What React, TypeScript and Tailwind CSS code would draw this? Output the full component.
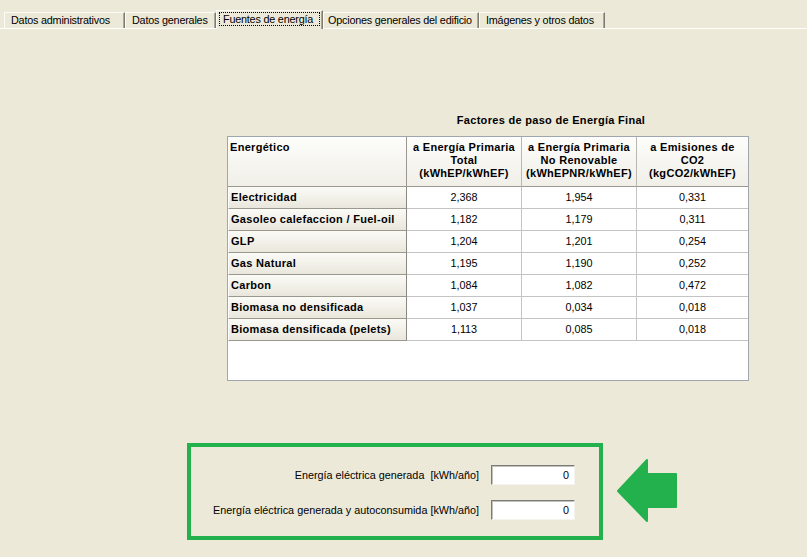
import React from "react";

const rows: string[][] = [
  ["Electricidad", "2,368", "1,954", "0,331"],
  ["Gasoleo calefaccion / Fuel-oil", "1,182", "1,179", "0,311"],
  ["GLP", "1,204", "1,201", "0,254"],
  ["Gas Natural", "1,195", "1,190", "0,252"],
  ["Carbon", "1,084", "1,082", "0,472"],
  ["Biomasa no densificada", "1,037", "0,034", "0,018"],
  ["Biomasa densificada (pelets)", "1,113", "0,085", "0,018"],
];

function Tab({ label, w, pl }: { label: string; w: string; pl: string }) {
  return (
    <div
      className={`${w} ${pl} h-[16px] flex items-center overflow-hidden tracking-[-0.2px] border-t border-l border-t-[#fbfbf8] border-l-[#fbfbf8] border-r border-r-[#7d7b72] shadow-[inset_-1px_0_#aca899] whitespace-nowrap`}
    >
      {label}
    </div>
  );
}

function Field({ label }: { label: string }) {
  return (
    <div className="flex items-center justify-end gap-[12px]">
      <span className="whitespace-pre">{label}</span>
      <div className="w-[84px] h-[20px] bg-white border border-t-[#7a7a7a] border-l-[#7a7a7a] border-b-[#f4f3ee] border-r-[#f4f3ee] shadow-[inset_1px_1px_#c4c2b8] flex items-center justify-end pr-[5px]">
        0
      </div>
    </div>
  );
}

export default function App() {
  return (
    <div className="w-[807px] h-[557px] bg-[#ECE9D8] overflow-hidden font-['Liberation_Sans',Arial,sans-serif] text-[10.8px] leading-none text-black">
      {/* tab strip */}
      <div className="h-[29px] flex items-end pl-[4px] border-b border-b-white">
        <Tab label="Datos administrativos" w="w-[121px]" pl="pl-[6px]" />
        <Tab label="Datos generales" w="w-[91px]" pl="pl-[6px]" />
        <div className="relative z-10 -mb-[1px] w-[107px] h-[19px] pt-[1px] px-[2px] bg-[#ECE9D8] border-t border-l border-t-[#fbfbf8] border-l-[#fbfbf8] border-r border-r-[#7d7b72] shadow-[inset_-1px_0_#aca899]">
          <div className="h-[14px] border border-dotted border-black flex items-center pl-[3px] tracking-[-0.2px] whitespace-nowrap overflow-hidden">
            Fuentes de energía
          </div>
        </div>
        <Tab label="Opciones generales del edificio" w="w-[156px]" pl="pl-[4px]" />
        <Tab label="Imágenes y otros datos" w="w-[126px]" pl="pl-[6px]" />
      </div>

      {/* title */}
      <div className="mt-[85px] ml-[457px] w-[188px] h-[13px] flex items-center justify-center font-bold tracking-[0.3px] text-[11px] whitespace-nowrap">
        Factores de paso de Energía Final
      </div>

      {/* table */}
      <div className="mt-[9px] ml-[227px] w-[522px] h-[245px] border border-[#a0a6ad] bg-white">
        <div className="grid grid-cols-[179px_115px_115px_111px] font-bold tracking-[0.3px] text-[11px]">
          <div className="h-[50px] pl-[2px] pt-[5px] border-r border-b border-r-[#9a988f] border-b-[#9a988f] bg-linear-to-b from-[#fdfdfb] to-[#f0efe8]">
            Energético
          </div>
          <div className="h-[50px] pt-[4px] border-r border-b border-r-[#b9b8b0] border-b-[#9a988f] bg-linear-to-b from-[#fdfdfb] to-[#f0efe8] flex flex-col items-center gap-[1px] leading-[12px]">
            <span>a Energía Primaria</span>
            <span>Total</span>
            <span>(kWhEP/kWhEF)</span>
          </div>
          <div className="h-[50px] pt-[4px] border-r border-b border-r-[#b9b8b0] border-b-[#9a988f] bg-linear-to-b from-[#fdfdfb] to-[#f0efe8] flex flex-col items-center gap-[1px] leading-[12px]">
            <span>a Energía Primaria</span>
            <span>No Renovable</span>
            <span>(kWhEPNR/kWhEF)</span>
          </div>
          <div className="h-[50px] pt-[4px] border-b border-b-[#9a988f] bg-linear-to-b from-[#fdfdfb] to-[#f0efe8] flex flex-col items-center gap-[1px] leading-[12px]">
            <span>a Emisiones de</span>
            <span>CO2</span>
            <span>(kgCO2/kWhEF)</span>
          </div>
        </div>
        {rows.map((r) => (
          <div key={r[0]} className="grid grid-cols-[179px_115px_115px_111px] h-[22px]">
            <div className="pl-[2px] flex items-center font-bold tracking-[0.3px] text-[11px] whitespace-nowrap border-l border-l-white border-r border-b border-r-[#8a887f] border-b-[#9a988f] bg-linear-to-b from-[#fbfbf7] to-[#e9e7dc]">
              {r[0]}
            </div>
            <div className="flex items-center justify-center border-r border-b border-[#c4c4c4]">{r[1]}</div>
            <div className="flex items-center justify-center border-r border-b border-[#c4c4c4]">{r[2]}</div>
            <div className="flex items-center justify-center border-b border-[#c4c4c4]">{r[3]}</div>
          </div>
        ))}
      </div>

      {/* generated energy box + arrow */}
      <div className="mt-[62px] ml-[187px] flex items-start">
        <div className="w-[416px] h-[97px] border-[4px] border-[#22b14c] pt-[18px] pr-[24px] flex flex-col gap-[15px]">
          <Field label="Energía eléctrica generada  [kWh/año]" />
          <Field label="Energía eléctrica generada y autoconsumida [kWh/año]" />
        </div>
        <svg width="62" height="66" viewBox="0 0 62 66" className="ml-[13px] mt-[14px]">
          <polygon
            points="2,34 31,3 31,17 60,17 60,50 31,50 31,64"
            fill="#22b14c"
            stroke="#22b14c"
            strokeWidth="2"
            strokeLinejoin="round"
          />
        </svg>
      </div>
    </div>
  );
}
